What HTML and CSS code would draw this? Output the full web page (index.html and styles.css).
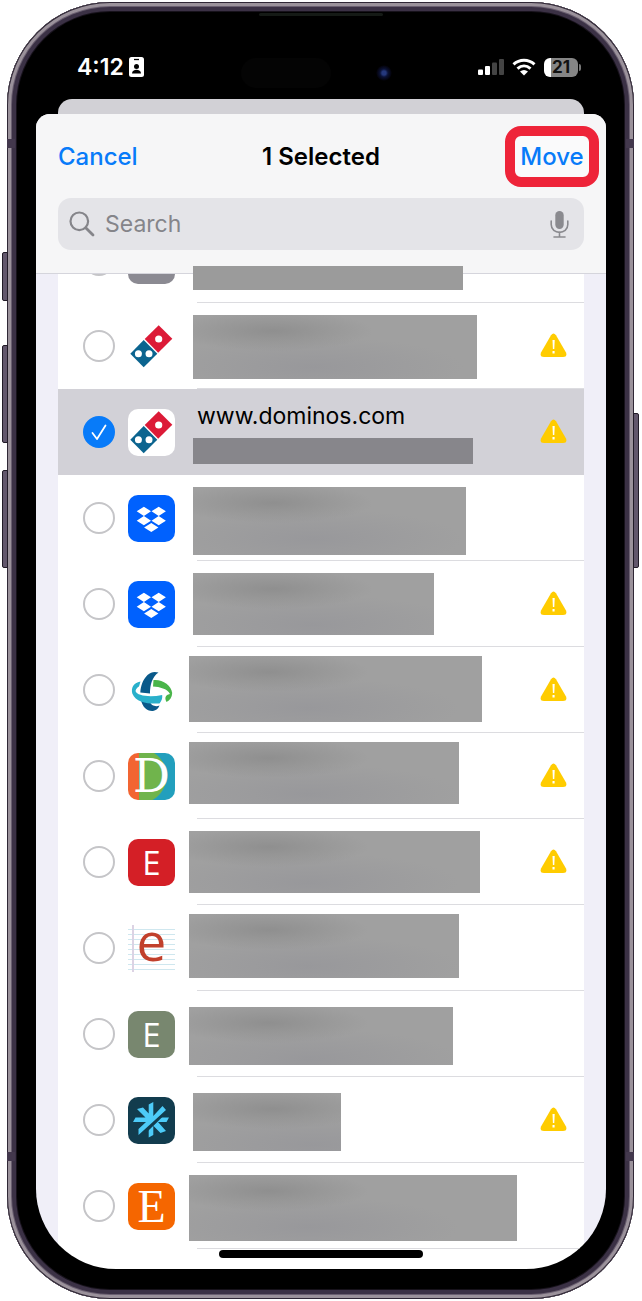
FILE: index.html
```html
<!DOCTYPE html>
<html lang="en">
<head>
<meta charset="utf-8">
<meta name="viewport" content="width=device-width, initial-scale=1">
<title>1 Selected</title>
<link rel="stylesheet" href="styles.css">
</head>
<body>
<svg class="defs" aria-hidden="true">
  <symbol id="warn" viewBox="0 0 27 25">
    <path d="M11 2.2Q13.500 -1 16 2.200L26 19.500Q27.500 24 23 24H4Q-.5 24 1 19.500Z" fill="#fc0"/>
    <path class="bang" d="M12.500 7h2.200l-.4 9h-1.400zM12.500 18h2.100v2.500h-2.100z"/>
  </symbol>
  <symbol id="domino" viewBox="0 0 47 47">
    <path d="M30.700 2.300 44.300 15.700 30.200 29.700 16.700 16Z" fill="#dc1a37"/>
    <path d="M15.700 17 29.300 30.700 15.700 44.200 2.300 30.700Z" fill="#0b648f"/>
    <g fill="#fff"><circle cx="30.700" cy="16" r="3.600"/><circle cx="10.400" cy="30.700" r="3.500"/><circle cx="21" cy="30.700" r="3.500"/></g>
  </symbol>
  <symbol id="boxes" viewBox="0 0 47 47">
    <path fill="#fff" d="M15.900 11.700l7.100 4.600-7.100 4.600-7.200-4.600zM30.700 11.700l7.200 4.600-7.200 4.600-7.200-4.600zM15.900 21.100l7.100 4.600-7.100 4.600-7.200-4.600zM30.700 21.100l7.200 4.600-7.200 4.600-7.200-4.600zM23.300 27.900l7.100 4.500-7.100 4.700-7.200-4.700z"/>
  </symbol>
</svg>

<main class="phone">
  <span class="key key-action"></span>
  <span class="key key-up"></span>
  <span class="key key-down"></span>
  <span class="key key-side"></span>
  <span class="seam seam-left"></span>
  <span class="seam seam-right"></span>
  <span class="seam seam-left seam-low"></span>
  <span class="seam seam-right seam-low"></span>
  <span class="earpiece"></span>

  <div class="status">
    <span class="island"></span>
    <span class="camera"></span>
    <span class="time">4:12</span>
    <svg class="badge" viewBox="0 0 15 20" aria-hidden="true"><rect width="15" height="20" rx="2.500" fill="#fff"/><path d="M5 2.500h5" stroke="#000" stroke-width="1.300"/><circle cx="7.500" cy="9.500" r="2.500"/><path d="M3 16.500c0-5 9-5 9 0z"/></svg>
    <span class="signals">
      <svg width="26" height="18" viewBox="0 0 26 18" aria-hidden="true"><g fill="#fff"><rect y="11.500" width="5" height="5.500" rx="1"/><rect x="7" y="8" width="5" height="9" rx="1"/></g><g fill="#444"><rect x="14" y="4.500" width="5" height="12.500" rx="1"/><rect x="21" y="1" width="5" height="16" rx="1"/></g></svg>
      <svg width="24" height="18" viewBox="0 0 24 18" aria-hidden="true"><g fill="none" stroke="#fff" stroke-width="3"><path d="M1.500 6.300c6-5.500 15-5.500 21 0"/><path d="M5.500 10.600c4-3.500 9-3.500 13 0"/></g><path d="M12 17.500 8 13.500q4-3 8 0Z" fill="#fff"/></svg>
      <span class="battery">21</span>
    </span>
  </div>

  <div class="behind"></div>

  <section class="sheet">
    <header class="head">
      <div class="bar">
        <button class="cancel" type="button">Cancel</button>
        <h1 class="title">1 Selected</h1>
        <button class="move" type="button">Move</button>
      </div>
      <div class="search">
        <svg width="26" height="26" viewBox="0 0 26 26" fill="none" stroke="#85858a" stroke-width="2.200" aria-hidden="true"><circle cx="10.300" cy="10.300" r="8.800"/><path d="m16.700 16.700 7.300 7.300" stroke-width="2.800" stroke-linecap="round"/></svg>
        <input class="field" type="text" placeholder="Search" aria-label="Search">
        <svg width="19" height="27" viewBox="0 0 19 27" aria-hidden="true"><rect x="5.300" width="8.400" height="18" rx="4.200" fill="#8a8a8f"/><path d="M1.200 10v3.500c0 10.500 16.600 10.500 16.600 0V10M9.500 21v5M4 26h11" fill="none" stroke="#8a8a8f" stroke-width="1.600" stroke-linecap="round"/></svg>
      </div>
    </header>

    <ul class="list">
      <li class="row row-cut">
        <label class="pick"><input type="checkbox" aria-label="Select account"></label>
        <span class="icon grey"></span>
        <div class="entry"><div class="lines"><span class="mask m0"></span></div></div>
      </li>
      <li class="row">
        <label class="pick"><input type="checkbox" aria-label="Select account"></label>
        <svg class="icon"><use href="#domino"/></svg>
        <div class="entry"><div class="lines"><span class="mask m1"></span></div><svg class="warn"><use href="#warn"/></svg></div>
      </li>
      <li class="row chosen">
        <label class="pick"><input type="checkbox" checked aria-label="Select www.dominos.com"><svg viewBox="0 0 32 32" aria-hidden="true"><path d="m9.500 17 4.500 6 8.500-13.500" fill="none" stroke="#fff" stroke-width="1.800" stroke-linecap="round" stroke-linejoin="round"/></svg></label>
        <svg class="icon white"><use href="#domino"/></svg>
        <div class="entry"><div class="lines"><span class="name">www.dominos.com</span><span class="mask m2"></span></div><svg class="warn"><use href="#warn"/></svg></div>
      </li>
      <li class="row">
        <label class="pick"><input type="checkbox" aria-label="Select account"></label>
        <svg class="icon blue"><use href="#boxes"/></svg>
        <div class="entry"><div class="lines"><span class="mask m3"></span></div></div>
      </li>
      <li class="row">
        <label class="pick"><input type="checkbox" aria-label="Select account"></label>
        <svg class="icon blue"><use href="#boxes"/></svg>
        <div class="entry"><div class="lines"><span class="mask m4"></span></div><svg class="warn"><use href="#warn"/></svg></div>
      </li>
      <li class="row">
        <label class="pick"><input type="checkbox" aria-label="Select account"></label>
        <svg class="icon" viewBox="0 0 47 47" aria-hidden="true">
          <path d="M13 33C14.500 40 19 44.500 25 44 28 43.500 30.500 41.500 31.500 38.500 28 40 23 39 21.500 34Z" fill="#09598a"/>
          <path d="M12.500 14.500C5 16 3 21 4.300 26.500 8 35.500 19 37 31.500 36.500 34 33.500 34.500 31 34.200 28 22 30.500 9 29 7.500 24 8 21.500 10 20 11 19.500Z" fill="#29b0cb"/>
          <path d="M30.500 5.500C27 4.500 23 4.500 19.500 8 14.500 13 12.800 19 12.300 25.500L22 26.500C22 18 24 10 30.500 5.500Z" fill="#09598a"/>
          <path d="M25.500 13C34 12 43.500 18 44.200 26 44 30 42 33.500 38.500 35 36.500 31 37 28 42 27 39 21.500 32 20 25 19.500Z" fill="#4ab54a"/>
        </svg>
        <div class="entry"><div class="lines high"><span class="mask wide m5"></span></div><svg class="warn"><use href="#warn"/></svg></div>
      </li>
      <li class="row">
        <label class="pick"><input type="checkbox" aria-label="Select account"></label>
        <span class="icon letter tricolor">D</span>
        <div class="entry"><div class="lines high"><span class="mask wide m6"></span></div><svg class="warn"><use href="#warn"/></svg></div>
      </li>
      <li class="row">
        <label class="pick"><input type="checkbox" aria-label="Select account"></label>
        <span class="icon letter red">E</span>
        <div class="entry"><div class="lines"><span class="mask wide m7"></span></div><svg class="warn"><use href="#warn"/></svg></div>
      </li>
      <li class="row">
        <label class="pick"><input type="checkbox" aria-label="Select account"></label>
        <span class="icon letter ruled">e</span>
        <div class="entry"><div class="lines high"><span class="mask wide m8"></span></div></div>
      </li>
      <li class="row">
        <label class="pick"><input type="checkbox" aria-label="Select account"></label>
        <span class="icon letter sage">E</span>
        <div class="entry"><div class="lines low"><span class="mask wide m9"></span></div></div>
      </li>
      <li class="row">
        <label class="pick"><input type="checkbox" aria-label="Select account"></label>
        <svg class="icon navy" viewBox="0 0 47 47" aria-hidden="true">
          <path fill="#4dcbf8" d="M20.700 7.500 25.300 5V19L34.500 9 38 13 10.500 38V32L18 25H5L7.500 20.500H17.500L9 12 15 10.500 20.700 16.500ZM25.300 28.500 31 22.700 32 20.500H41L38.500 25H30L38 34 32.500 36 25.300 28.700V38L20.700 40.500V31Z"/>
          <path d="M17 35.500 38.500 14.500" stroke="#123c4e" stroke-width="2"/>
        </svg>
        <div class="entry"><div class="lines low"><span class="mask m10"></span></div><svg class="warn"><use href="#warn"/></svg></div>
      </li>
      <li class="row">
        <label class="pick"><input type="checkbox" aria-label="Select account"></label>
        <span class="icon letter serif">E</span>
        <div class="entry"><div class="lines"><span class="mask wide m11"></span></div></div>
      </li>
    </ul>
    <span class="home"></span>
  </section>
</main>
</body>
</html>
```
FILE: styles.css
```css
* { box-sizing: border-box; }

body {
  margin: 0;
  padding: 2px 8px 2px 7px;
  background: #fff;
  font-family: Inter, "Liberation Sans", sans-serif;
  color: #000;
}

button {
  padding: 0;
  border: 0;
  background: none;
  font: inherit;
  color: #087bf9;
}

.defs { position: absolute; width: 0; height: 0; }

.phone {
  position: relative;
  padding: 0 28px 30px 29px;
  border-radius: 103px;
  background: #000;
  box-shadow: inset 0 0 0 1px #2f2735, inset 0 0 0 4px #9b929b, inset 0 0 0 5px #6a5f70, inset 0 0 0 9px #3b3145, inset 0 0 0 10px #17121b;
}

/* hardware buttons on the edges of the case */
.key {
  position: absolute;
  left: -5px;
  width: 6px;
  border: 1px solid #211b27;
  border-radius: 2px 0 0 2px;
  background: #62576c;
}
.key-action { top: 250px; height: 49px; }
.key-up { top: 343px; height: 98px; }
.key-down { top: 468px; height: 98px; }
.key-side { top: 411px; right: -5px; left: auto; height: 155px; border-radius: 0 2px 2px 0; }

/* antenna lines across the frame */
.seam {
  position: absolute;
  top: 137px;
  width: 8px;
  height: 9px;
  background: #43384d;
}
.seam-left { left: 0; }
.seam-right { right: 0; }
.seam-low { top: auto; bottom: 138px; }

.earpiece {
  position: absolute;
  top: 11px;
  left: 252px;
  width: 124px;
  height: 3px;
  border-radius: 2px;
  background: #151a16;
}

.status {
  position: relative;
  display: flex;
  align-items: center;
  height: 97px;
  padding: 33px 28px 0 41px;
  color: #fff;
}
.time { font-size: 23px; font-weight: 600; line-height: 28px; }
.badge { width: 15px; height: 20px; margin-left: 5px; }
.signals { display: flex; align-items: center; gap: 8px; margin-left: auto; }
.battery {
  position: relative;
  width: 34px;
  height: 19px;
  border-radius: 6px;
  background: linear-gradient(90deg, #fff 7px, #858585 7px);
  color: #111;
  font-size: 17px;
  font-weight: 700;
  line-height: 19px;
  text-align: center;
}
.battery::after {
  content: "";
  position: absolute;
  top: 6px;
  right: -3px;
  width: 2px;
  height: 7px;
  border-radius: 0 2px 2px 0;
  background: #777;
}
.island {
  position: absolute;
  top: 56px;
  left: 205px;
  width: 90px;
  height: 30px;
  border-radius: 15px;
  background: #040404;
}
.camera {
  position: absolute;
  top: 63px;
  left: 340px;
  width: 16px;
  height: 16px;
  border-radius: 50%;
  background: radial-gradient(circle, #25387c 0 2px, #0b1236 4px, #04040f 7px, #000 8px);
}

.behind {
  height: 15px;
  margin: 0 22px;
  border-radius: 14px 14px 0 0;
  background: #d2d1d6;
}

.sheet {
  position: relative;
  overflow: hidden;
  border-radius: 14px 14px 80px 80px;
  background: linear-gradient(90deg, #f0eff8 22px, #fff 22px calc(100% - 22px), #f0eff8 calc(100% - 22px));
}

.head {
  position: relative;
  z-index: 1;
  padding-bottom: 23px;
  border-bottom: 1px solid #d5d5dc;
  background: #f6f6f7;
}
.bar {
  display: grid;
  grid-template-columns: 1fr auto 1fr;
  align-items: center;
  padding: 12px 7px 11px;
  font-size: 24px;
  line-height: 30px;
}
.cancel { justify-self: start; margin-left: 15px; font-weight: 500; }
.title { margin: 0; font-size: 24px; font-weight: 600; }
.move {
  justify-self: end;
  width: 94px;
  height: 61px;
  border: 10px solid #ee2439;
  border-radius: 16px;
  background: #fafafb;
  font-weight: 500;
}
.search {
  display: flex;
  align-items: center;
  gap: 10px;
  height: 52px;
  margin: 0 22px;
  padding: 0 15px 0 11px;
  border-radius: 13px;
  background: #e4e4e8;
}
.field {
  flex: 1;
  min-width: 0;
  padding: 0;
  border: 0;
  outline: 0;
  background: none;
  font: inherit;
  font-size: 23px;
}
.field::placeholder { color: #85858a; opacity: 1; }

.list {
  margin: 0;
  padding: 0 22px 20px;
  list-style: none;
}
.row {
  display: flex;
  align-items: center;
  height: 86px;
  padding-left: 25px;
}
.row-cut { margin-top: -57px; }
.chosen { background: #d2d1d7; }

.pick { display: grid; width: 32px; height: 32px; margin-right: 13px; }
.pick > * { grid-area: 1 / 1; }
.pick input {
  appearance: none;
  width: 32px;
  height: 32px;
  margin: 0;
  border: 2px solid #c5c5c8;
  border-radius: 50%;
}
.pick input:checked { border-color: #087bf9; background: #087bf9; }
.pick svg { z-index: 0; pointer-events: none; }

.icon {
  flex: none;
  width: 47px;
  height: 47px;
  border-radius: 10px;
}
.grey { background: #8b8a92; }
.white { background: #fff; }
.blue { background: #0061fe; }
.navy { background: #123c4e; }
.letter {
  color: #fff;
  font: 400 33px/47px "Open Sans", sans-serif;
  text-align: center;
}
.red { background: #d41f26; }
.sage { background: #78876f; }
.serif {
  background: #f56600;
  font: 400 46px/47px "Liberation Serif", serif;
}
.tricolor {
  background:
    linear-gradient(90deg, #f26532 11px, transparent 11px),
    radial-gradient(circle at 11px 23px, #70b44c 27px, #229fbd 28px);
  font: 400 46px/47px "DejaVu Serif", serif;
}
.ruled {
  border-radius: 0;
  background:
    linear-gradient(90deg, transparent 4px, #dcd3e4 4px 6px, transparent 6px),
    repeating-linear-gradient(#fff 0 4px, #cfe7ef 4px 5px);
  color: #c1402c;
  font: 400 53px/32px "Open Sans", sans-serif;
}

.entry {
  display: flex;
  flex: 1;
  align-self: stretch;
  align-items: center;
  justify-content: space-between;
  min-width: 0;
  margin-left: 22px;
  padding-right: 17px;
  border-bottom: 1px solid #dcdce0;
}
.chosen .entry { border-color: transparent; }

.lines {
  display: flex;
  flex-direction: column;
  align-self: stretch;
  align-items: flex-start;
  padding-top: 12px;
}
.high { padding-top: 9px; }
.low { padding-top: 16px; }
.name { font-size: 23px; line-height: 30px; }

/* opaque covers over private account details */
.mask {
  position: relative;
  z-index: 2;
  flex: none;
  margin-left: -4px;
  background:
    radial-gradient(ellipse 100px 20px at 80px 16px, #8f8f8f, rgb(143 143 143 / 0)),
    radial-gradient(ellipse 150px 30px at 120px 52px, #98989b, rgb(152 152 155 / 0)),
    #a0a0a0;
}
.wide { margin-left: -8px; }
.m0 { width: 270px; height: 24px; margin-top: 37px; background: #9b9b9b; }
.m1 { width: 284px; height: 64px; }
.m2 { width: 280px; height: 26px; margin-top: 7px; background: #87868b; }
.m3 { width: 273px; height: 68px; }
.m4 { width: 241px; height: 62px; }
.m5 { width: 293px; height: 66px; }
.m6 { width: 270px; height: 62px; }
.m7 { width: 291px; height: 62px; }
.m8 { width: 270px; height: 64px; }
.m9 { width: 264px; height: 58px; }
.m10 { width: 148px; height: 58px; }
.m11 { width: 328px; height: 66px; }

.warn { flex: none; width: 27px; height: 25px; }
.bang { fill: #fff; }
.chosen .bang { fill: #e5d9a5; }

.home {
  position: absolute;
  bottom: 11px;
  left: 50%;
  z-index: 3;
  width: 204px;
  height: 8px;
  margin-left: -102px;
  border-radius: 4px;
  background: #000;
}
```
